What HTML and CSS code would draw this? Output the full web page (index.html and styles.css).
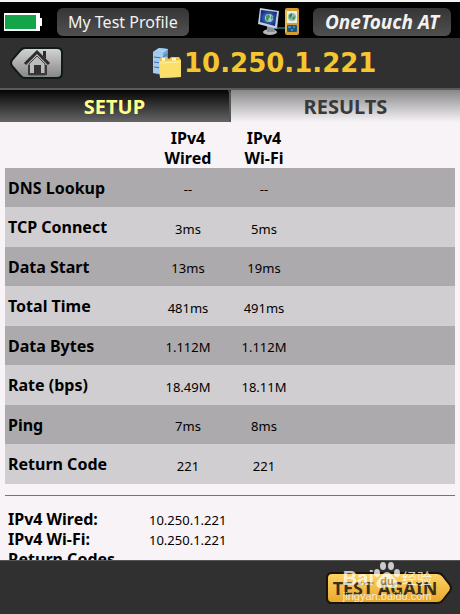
FILE: index.html
```
<!DOCTYPE html>
<html lang="en">
<head>
    <meta charset="UTF-8">
    <meta name="viewport" content="width=device-width, initial-scale=1.0">
    <title>OneTouch AT - Results</title>
    <link rel="stylesheet" href="styles.css">
</head>
<body>
    <div class="topbar">
        <svg class="battery" width="40" height="20" viewBox="0 0 40 20" role="img" aria-label="Battery full">
            <path d="M0 1h36v5h2v8h-2v5H0z" fill="#fff"/>
            <path d="M1 3h31v14H1z" fill="#14a548"/>
        </svg>
        <button class="pill">My Test Profile</button>
        <svg class="devices" width="42" height="30" viewBox="0 0 42 30" aria-hidden="true">
            <defs>
                <radialGradient id="screen">
                    <stop offset="0" stop-color="#5f94cc"/>
                    <stop offset="1" stop-color="#142c86"/>
                </radialGradient>
            </defs>
            <ellipse cx="12" cy="25" rx="7" ry="3" fill="#b4b7bd"/>
            <path d="M9 19h7l1 6H9z" fill="#888d96"/>
            <path d="M2 1l19 3-2 18L0 17z" fill="#c3cfdf"/>
            <path d="M3 3l16 2-2 14L2 15z" fill="url(#screen)"/>
            <circle cx="11" cy="11" r="4" fill="#a4cdd0"/>
            <path d="M8 9l3-2 1 3-2 3 1 2-3-2zM13 8l2 3-2 2z" fill="#3f9a58"/>
            <path d="M18 21h10" stroke="#32b5bd" stroke-width="1"/>
            <rect x="27" y="1" width="14" height="27" rx="2" fill="#d59b32"/>
            <path d="M28 3v22" stroke="#f5d878"/>
            <rect x="29" y="4" width="10" height="12" fill="#e8efe6"/>
            <circle cx="34" cy="10" r="4" fill="#8dbda7"/>
            <path d="M31 8l3-2v3l-2 3zM34 11l3-2-1 4z" fill="#35864c"/>
            <rect x="29" y="18" width="10" height="7" rx="1" fill="#1b5687"/>
            <path d="M30 20h3m2 0h2m-4 3h2" stroke="#7dbbd3"/>
        </svg>
        <button class="pill brand">OneTouch AT</button>
    </div>

    <div class="header">
        <button class="home" aria-label="Home">
            <svg width="56" height="36" viewBox="0 0 56 36" aria-hidden="true">
                <defs>
                    <linearGradient id="metal" x1="0" y1="0" x2="0" y2="1">
                        <stop offset="0" stop-color="#d5d5d5"/>
                        <stop offset="1" stop-color="#858585"/>
                    </linearGradient>
                </defs>
                <path d="M17 3h32q5 0 5 5v20q0 5-5 5H17q-3 0-5-3L4 21q-2-3 0-6l8-9q2-3 5-3z" fill="url(#metal)" stroke="#111b16" stroke-width="2"/>
                <path d="M17 19L29 7l12 12" fill="none" stroke="#2d2d2d" stroke-width="3"/>
                <path d="M35 6h3v8l-3-3z" fill="#2d2d2d"/>
                <path d="M21 19l8-8 8 8v11H21z" fill="#bcbcbc" stroke="#454545"/>
                <path d="M20 29h19M21 20v9M38 20v9" stroke="#3b3b3b" stroke-width="2"/>
                <path d="M26 20h7v9h-7z" fill="#333"/>
            </svg>
        </button>
        <h1>
            <svg width="32" height="32" viewBox="0 0 32 32" aria-hidden="true">
                <path d="M2 5l6-4 9 1-1 24-5 2-9-2z" fill="#6ca7dc"/>
                <path d="M2 5l6-4 9 1-5 4z" fill="#aad0f1"/>
                <path d="M2 5l10 1v21l-10-1z" fill="#a5cced"/>
                <path d="M3 10l8 1 5-4M3 15l8 1 5-4M3 20l8 1 5-4" fill="none" stroke="#3771ac"/>
                <path d="M8 12l2-2h6l2 2 2-2h8l2 3v17l-21 1z" fill="#f1c340"/>
                <path d="M11 11h3v3h-3zM21 11h4v3h-4z" fill="#fffbd9"/>
                <path d="M8 14l22-1v17l-21 1z" fill="#fbdf6b"/>
                <path d="M9 16l20-1" stroke="#fff0a0"/>
            </svg>
            10.250.1.221
        </h1>
    </div>

    <div class="tabs">
        <button class="tab">SETUP</button>
        <button class="tab active">RESULTS</button>
    </div>

    <div class="content">
        <table>
            <thead>
                <tr>
                    <td class="label"></td>
                    <th>IPv4<br>Wired</th>
                    <th>IPv4<br>Wi-Fi</th>
                    <td></td>
                </tr>
            </thead>
            <tbody>
                <tr><th>DNS Lookup</th><td>--</td><td>--</td><td></td></tr>
                <tr><th>TCP Connect</th><td>3ms</td><td>5ms</td><td></td></tr>
                <tr><th>Data Start</th><td>13ms</td><td>19ms</td><td></td></tr>
                <tr><th>Total Time</th><td>481ms</td><td>491ms</td><td></td></tr>
                <tr><th>Data Bytes</th><td>1.112M</td><td>1.112M</td><td></td></tr>
                <tr><th>Rate (bps)</th><td>18.49M</td><td>18.11M</td><td></td></tr>
                <tr><th>Ping</th><td>7ms</td><td>8ms</td><td></td></tr>
                <tr><th>Return Code</th><td>221</td><td>221</td><td></td></tr>
            </tbody>
        </table>

        <dl class="addresses">
            <dt>IPv4 Wired:</dt><dd>10.250.1.221</dd>
            <dt>IPv4 Wi-Fi:</dt><dd>10.250.1.221</dd>
            <dt>Return Codes</dt><dd></dd>
        </dl>
    </div>

    <div class="footer">
        <button class="again">
            <svg width="130" height="36" viewBox="0 0 130 36" aria-hidden="true">
                <defs>
                    <linearGradient id="gold" x1="0" y1="0" x2="0" y2="1">
                        <stop offset="0" stop-color="#ffd465"/>
                        <stop offset="1" stop-color="#e9a62b"/>
                    </linearGradient>
                </defs>
                <path d="M8 3h105q4 0 6 3l7 9q2 3 0 6l-7 9q-2 3-6 3H8q-5 0-5-5V8q0-5 5-5z" fill="url(#gold)" stroke="#17140c" stroke-width="2"/>
            </svg>
            <span>TEST AGAIN</span>
        </button>
        <div class="watermark">
            <div class="mark">
                <span>Bai</span>
                <svg width="26" height="28" viewBox="0 0 26 28" aria-hidden="true">
                    <g fill="#fff">
                        <ellipse cx="3" cy="12" rx="3" ry="4"/>
                        <ellipse cx="9" cy="5" rx="3" ry="4"/>
                        <ellipse cx="17" cy="5" rx="3" ry="4"/>
                        <ellipse cx="23" cy="12" rx="3" ry="4"/>
                        <path d="M13 11c4 0 5 4 8 7 5 5 2 10-3 9-4-1-6-1-10 0-5 1-8-4-3-9 3-3 4-7 8-7z"/>
                    </g>
                    <text class="du" x="13" y="24" text-anchor="middle">du</text>
                </svg>
                <span class="cjk">经验</span>
            </div>
            <div class="site">jingyan.baidu.com</div>
        </div>
    </div>
</body>
</html>
```
FILE: styles.css
```
* {
    box-sizing: border-box;
}

body {
    font-family: "Noto Sans", Tahoma, Verdana, sans-serif;
    background-color: #303030;
    margin: 0;
    height: 100vh;
    display: flex;
    flex-direction: column;
    color: #000;
}

button {
    font-family: inherit;
    border: none;
    background: none;
    padding: 0;
    cursor: pointer;
}

svg {
    display: block;
}

/* Status bar */
.topbar {
    display: flex;
    align-items: center;
    height: 38px;
    padding: 3px 9px 0 4px;
    border-top: 2px solid #f3f3f3;
    background-color: #000;
}

.pill {
    height: 28px;
    padding: 0 11px;
    border-radius: 6px;
    background-image: linear-gradient(#353535, #505050);
    color: #f2f2f2;
    font-size: 16px;
}

.battery {
    margin-right: 13px;
}

.devices {
    margin-left: auto;
    margin-right: 13px;
}

.brand {
    padding: 0 12px;
    font-size: 19px;
    font-weight: bold;
    font-style: italic;
}

/* Title */
.header {
    display: flex;
    align-items: center;
    height: 50px;
    padding-left: 8px;
}

.header h1 {
    display: flex;
    align-items: center;
    gap: 1px;
    margin: 0 0 0 87px;
    color: #f6c62f;
    font-family: "DejaVu Sans", Verdana, sans-serif;
    font-size: 26px;
    line-height: 32px;
}

/* Tabs */
.tabs {
    display: flex;
    height: 34px;
    border-top: 2px solid #5b5b5b;
}

.tab {
    flex: 1;
    border-right: 2px solid #555;
    border-top-right-radius: 4px;
    background-image: linear-gradient(#050505, #656565);
    color: #ffff8c;
    font-size: 20px;
    font-weight: bold;
}

.tab.active {
    border-right: none;
    border-radius: 0;
    background-image: linear-gradient(#888, #f7f3f7);
    color: #393939;
}

/* Results */
.content {
    flex: 1;
    min-height: 0;
    overflow: hidden;
    padding: 5px 5px 0;
    background-color: #f7f3f7;
}

table {
    width: 100%;
    table-layout: fixed;
    border-collapse: collapse;
    font-size: 13px;
}

th, td {
    padding: 0;
    text-align: center;
}

th {
    font-size: 16px;
    line-height: 20px;
}

thead th, thead td {
    width: 76px;
    height: 41px;
}

thead td:last-child {
    width: auto;
}

thead .label {
    width: 145px;
}

tbody tr {
    height: 39px;
    background-color: #adaaad;
}

tbody tr:nth-child(even) {
    height: 40px;
    background-color: #d0ced0;
}

tbody th {
    padding-left: 3px;
    text-align: left;
}

tbody td {
    padding-top: 3px;
}

.addresses {
    display: grid;
    grid-template-columns: 141px 1fr;
    margin: 11px 0 0;
    padding: 13px 3px 0;
    border-top: 1px solid #737573;
    line-height: 20px;
}

.addresses dt {
    font-size: 16px;
    font-weight: bold;
}

.addresses dd {
    margin: 0;
    padding-top: 2px;
    font-size: 13px;
    line-height: 18px;
}

/* Bottom bar */
.footer {
    position: relative;
    display: flex;
    justify-content: flex-end;
    align-items: center;
    height: 54px;
    padding-right: 6px;
    border-top: 1px solid #555;
}

.again {
    display: grid;
    place-items: center;
    color: #39301a;
    font-size: 18px;
    font-weight: bold;
}

.again svg, .again span {
    grid-area: 1 / 1;
}

.again span {
    padding-right: 8px;
}

.watermark {
    position: absolute;
    right: 28px;
    bottom: 11px;
    color: #fff;
    font-family: "Liberation Sans", "Noto Sans CJK SC", sans-serif;
    opacity: 0.75;
    pointer-events: none;
}

.mark {
    display: flex;
    align-items: flex-end;
    font-size: 20px;
    font-weight: bold;
    line-height: 22px;
}

.cjk {
    margin-left: 2px;
    font-family: "Noto Sans CJK SC", sans-serif;
    font-size: 15px;
    font-weight: normal;
}

.du {
    fill: #a98236;
    font-size: 11px;
}

.site {
    font-size: 11px;
    line-height: 14px;
}
```
